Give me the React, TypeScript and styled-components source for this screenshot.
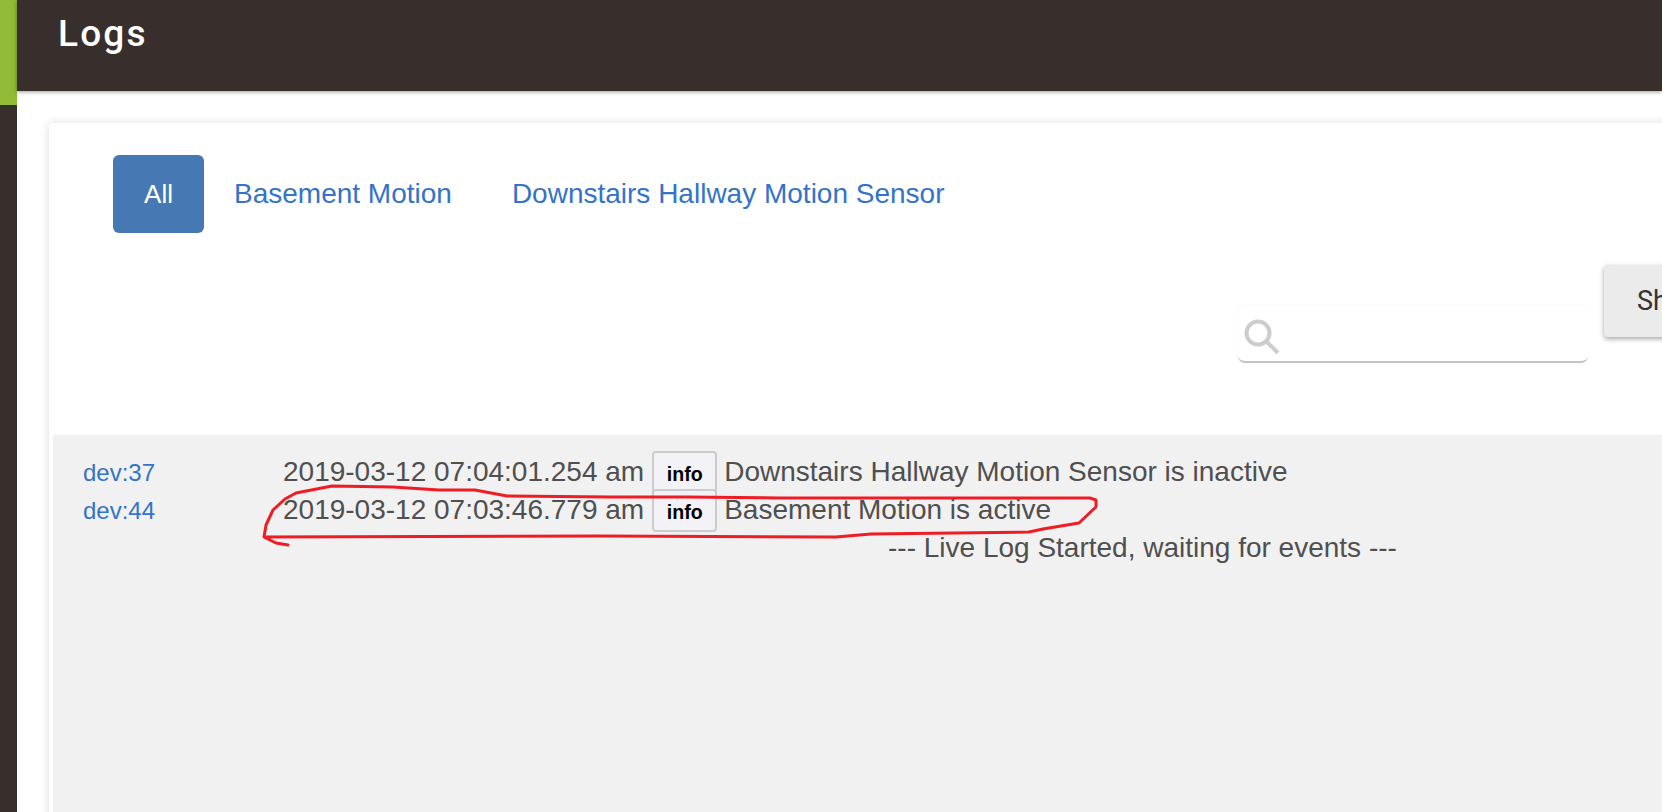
import React from "react";
import styled, { createGlobalStyle } from "styled-components";

const GlobalStyle = createGlobalStyle`
  html, body {
    margin: 0;
    padding: 0;
    background: #fff;
    overflow: hidden;
  }
`;

const Page = styled.div`
  position: relative;
  display: flex;
  width: 1662px;
  height: 812px;
  overflow: hidden;
  font-family: "Liberation Sans", Arial, sans-serif;
`;

const Sidebar = styled.div`
  flex: 0 0 17px;
  background-color: #382e2b;
`;

const SidebarAccent = styled.div`
  height: 105px;
  background-color: #91bb34;
`;

const Main = styled.div`
  flex: 1;
  min-width: 0;
  display: flex;
  flex-direction: column;
`;

const Header = styled.header`
  flex: 0 0 91px;
  box-sizing: border-box;
  padding: 11px 0 0 41px;
  background-color: #382e2b;
  box-shadow: 0 1px 4px rgba(0, 0, 0, 0.4);
`;

const Title = styled.h1`
  margin: 0;
  font-family: Roboto, sans-serif;
  font-size: 37px;
  line-height: 46px;
  font-weight: 500;
  letter-spacing: 2.2px;
  color: #fff;
`;

const Card = styled.section`
  flex: none;
  width: 1800px;
  height: 760px;
  margin: 32px 0 0 32px;
  padding: 32px 0 0 4px;
  box-sizing: border-box;
  background-color: #fff;
  border-radius: 4px;
  box-shadow: 0 0 10px rgba(0, 0, 0, 0.14);
`;

const Tabs = styled.nav`
  display: flex;
  align-items: center;
  height: 78px;
  padding-left: 60px;
`;

const ActiveTab = styled.a`
  display: flex;
  align-items: center;
  justify-content: center;
  width: 91px;
  height: 78px;
  margin-right: 30px;
  border-radius: 6px;
  background-color: #4679b3;
  color: #fff;
  font-size: 26px;
`;

const TabLink = styled.a`
  margin-right: 60px;
  font-size: 28px;
  color: #3473c8;
`;

const Toolbar = styled.div`
  display: flex;
  align-items: flex-start;
  height: 170px;
  margin-top: 32px;
  padding-left: 1185px;
  box-sizing: border-box;
`;

const SearchBox = styled.div`
  display: flex;
  align-items: center;
  width: 350px;
  height: 58px;
  margin-top: 40px;
  padding: 7px 0 0 5px;
  box-sizing: border-box;
  background-color: #fff;
  border-bottom: 2px solid #c4c4c4;
  border-radius: 7px;
  box-shadow: 0 0 2px rgba(0, 0, 0, 0.06);
`;

const SearchInput = styled.input`
  flex: 1;
  min-width: 0;
  border: 0;
  outline: 0;
  background: transparent;
  font-size: 24px;
`;

const ShowButton = styled.button`
  width: 200px;
  height: 72px;
  margin-left: 16px;
  padding: 0 0 0 33px;
  border: 0;
  border-radius: 4px;
  background-color: #ebebeb;
  box-shadow: 0 2px 5px rgba(0, 0, 0, 0.35);
  color: #333;
  font-family: Roboto, sans-serif;
  font-size: 27px;
  text-align: left;
`;

const LogArea = styled.div`
  height: 400px;
  padding-top: 18px;
  box-sizing: border-box;
  background-color: #f1f1f1;
  color: #4f4f4f;
  font-size: 28px;
`;

const LogRow = styled.div`
  display: flex;
  align-items: center;
  height: 38px;
  padding-left: 30px;
  white-space: nowrap;
`;

const DeviceLink = styled.a`
  flex: 0 0 200px;
  padding-top: 2px;
  font-size: 24px;
  color: #3473c8;
`;

const Level = styled.span`
  display: flex;
  align-items: center;
  justify-content: center;
  box-sizing: border-box;
  width: 65px;
  height: 43px;
  margin: 0 7px 0 8px;
  padding-top: 4px;
  background-color: #f3f3f7;
  border: 2px solid #ccc;
  border-radius: 4px;
  color: #000;
  font-size: 19.6px;
  font-weight: 700;
`;

const LiveNotice = styled.div`
  height: 38px;
  line-height: 38px;
  padding-left: 835px;
  white-space: nowrap;
`;

const Scribble = styled.svg`
  position: absolute;
  left: 0;
  top: 0;
  pointer-events: none;
`;

const logs = [
  { dev: "dev:37", time: "2019-03-12 07:04:01.254 am", text: "Downstairs Hallway Motion Sensor is inactive" },
  { dev: "dev:44", time: "2019-03-12 07:03:46.779 am", text: "Basement Motion is active" },
];

const App: React.FC = () => {
  return (
    <Page>
      <GlobalStyle />
      <Sidebar>
        <SidebarAccent />
      </Sidebar>
      <Main>
        <Header>
          <Title>Logs</Title>
        </Header>
        <Card>
          <Tabs>
            <ActiveTab>All</ActiveTab>
            <TabLink>Basement Motion</TabLink>
            <TabLink>Downstairs Hallway Motion Sensor</TabLink>
          </Tabs>
          <Toolbar>
            <SearchBox>
              <svg width="38" height="38" viewBox="0 0 38 38" fill="none" stroke="#cccccc" strokeWidth="4">
                <circle cx="15" cy="15" r="11.5" />
                <path d="M23.5 23.5 L35 35" />
              </svg>
              <SearchInput />
            </SearchBox>
            <ShowButton>Show</ShowButton>
          </Toolbar>
          <LogArea>
            {logs.map((log) => (
              <LogRow key={log.dev}>
                <DeviceLink>{log.dev}</DeviceLink>
                <span>{log.time}</span>
                <Level>info</Level>
                <span>{log.text}</span>
              </LogRow>
            ))}
            <LiveNotice>--- Live Log Started, waiting for events ---</LiveNotice>
          </LogArea>
        </Card>
      </Main>
      <Scribble width="1662" height="812" viewBox="0 0 1662 812" fill="none">
        <path
          d="M288 545 L276 543 L264 537 L266 525 L273 510 L285 499 L296 493 L332 486 L393 487 L439 490 L475 490 L507 496 L610 497 L686 497 L779 498 L1090 498 L1096 500 L1096 507 L1079 523 L1043 529 L1029 532 L871 534 L836 537 L600 536 L264 537"
          stroke="#ee1c25"
          strokeWidth="3"
          strokeLinejoin="round"
          strokeLinecap="round"
        />
      </Scribble>
    </Page>
  );
};

export default App;
